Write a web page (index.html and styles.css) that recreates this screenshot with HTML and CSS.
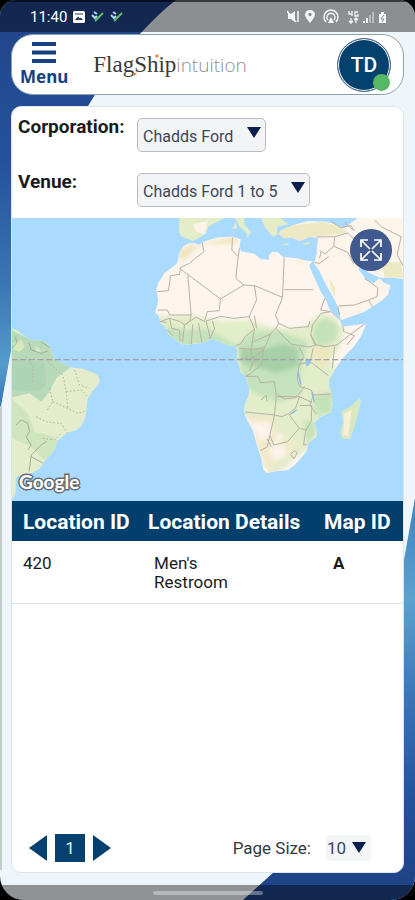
FILE: index.html
```html
<!DOCTYPE html>
<html lang="en">
<head>
<meta charset="utf-8">
<meta name="viewport" content="width=device-width, initial-scale=1">
<title>FlagShip intuition</title>
<link rel="stylesheet" href="styles.css">
</head>
<body>
<div class="screen">
  <svg class="backdrop" viewBox="0 0 415 900" preserveAspectRatio="none" aria-hidden="true">
    <defs>
      <linearGradient id="blueTop" x1="0" y1="0" x2="0" y2="1">
        <stop offset="0" stop-color="#21438a"/><stop offset=".4" stop-color="#24529b"/><stop offset=".7" stop-color="#3b76b4"/><stop offset=".9" stop-color="#559bce"/><stop offset="1" stop-color="#3673b0"/>
      </linearGradient>
      <linearGradient id="blueBottom" x1="0" y1="0" x2="0" y2="1">
        <stop offset="0" stop-color="#4083bd"/><stop offset=".25" stop-color="#5ba2d1"/><stop offset=".5" stop-color="#3975b7"/><stop offset=".75" stop-color="#24519c"/><stop offset="1" stop-color="#1d4183"/>
      </linearGradient>
    </defs>
    <path d="M0 0H176Q160 12 140 34Q112 65 88 106L12 345L1 406H0Z" fill="url(#blueTop)"/>
    <path d="M415 498L404 560Q380 700 274 872L243 900H415Z" fill="url(#blueBottom)"/>
    <path d="M0 406H2V870H0Z" fill="#c5cacd"/>
  </svg>

  <div class="status">
    <span class="status-left">
      <span class="clock">11:40</span>
      <svg width="12" height="12" viewBox="0 0 12 12"><rect width="12" height="12" rx="1.5" fill="#fff"/><path d="M2 9L5 5.500L7 7.500L8 6.500L10 9Z" fill="#24345f"/><path d="M2 3H10" stroke="#24345f"/></svg>
      <svg width="13" height="12" viewBox="0 0 13 12"><path d="M1 4L4 7L6 5M3 1L6 3" stroke="#a9d8f4" stroke-width="2" fill="none"/><path d="M4 10L8 6L12 2" stroke="#63bd63" stroke-width="2" fill="none"/></svg>
      <svg width="13" height="12" viewBox="0 0 13 12"><path d="M1 4L4 7L6 5M3 1L6 3" stroke="#a9d8f4" stroke-width="2" fill="none"/><path d="M4 10L8 6L12 2" stroke="#63bd63" stroke-width="2" fill="none"/></svg>
    </span>
    <svg class="status-right" width="100" height="16" viewBox="0 0 100 16" fill="none" stroke="#f5f5f5">
      <path d="M1 5H4L8 2V13L4 10H1Z" fill="#f5f5f5" stroke="none"/><path d="M0 2L9 13" stroke-width="1.500"/><path d="M11 2V13" stroke-width="1.500"/>
      <path d="M23 14Q18 8 18 5.500A5 4.500 0 0 1 28 5.500Q28 8 23 14Z" fill="#f5f5f5" stroke="none"/><circle cx="23" cy="5.500" r="1.700" fill="#8b8e8f" stroke="none"/>
      <path d="M39 13A7 7 0 1 1 49 13M41 11A4 4 0 1 1 47 11" stroke-width="1.500"/><path d="M44 8L47 14H41Z" fill="#f5f5f5" stroke="none"/>
      <path d="M62 2V5H65M65 2V7M71 3H68V7H71V5M64 9V14M62 12L64 14L66 12M69 14V9M67 11L69 9L71 11" stroke-width="1.300"/>
      <path d="M77 14V12M80 14V9" stroke-width="2"/><path d="M83 14V6M86 14V3" stroke="#b9bcbc" stroke-width="2"/>
      <path d="M92 5H94V3H97V5H99V14H92Z" fill="#f5f5f5" stroke="none"/><path d="M97 6L94 10H97L95 13" stroke="#8b8e8f"/>
    </svg>
  </div>

  <header class="topbar">
    <button class="menu" type="button">
      <svg width="26" height="24" viewBox="0 0 26 24" aria-hidden="true"><path d="M1 3H25M1 11.500H25M1 20H25" stroke="#174180" stroke-width="4"/></svg>
      <span>Menu</span>
    </button>
    <div class="brand"><span class="brand-main">FlagShip</span><span class="brand-sub">intuition</span>
      <svg class="brand-dots" viewBox="0 0 152 32" aria-hidden="true"><circle cx="64" cy="7" r="1.800" fill="#e0954a"/><path d="M39 24H44L41.500 27Z" fill="#e0872b"/></svg>
    </div>
    <button class="avatar" type="button" aria-label="Account TD">TD<span class="presence"></span></button>
  </header>

  <main class="card">
    <form class="filters">
      <label for="corp">Corporation:</label>
      <div class="pick">
        <select id="corp"><option>Chadds Ford</option></select>
        <svg class="caret" viewBox="0 0 14 11" aria-hidden="true"><path d="M0 0H14L7 11Z" fill="#0a1e4d"/></svg>
      </div>
      <label for="venue">Venue:</label>
      <div class="pick">
        <select id="venue"><option>Chadds Ford 1 to 5</option></select>
        <svg class="caret" viewBox="0 0 14 11" aria-hidden="true"><path d="M0 0H14L7 11Z" fill="#0a1e4d"/></svg>
      </div>
    </form>

    <div class="map">
      <svg class="map-art" viewBox="-579 9 1176 849" preserveAspectRatio="xMidYMid slice" role="img" aria-label="Map of Africa and the Atlantic">
        <defs>
          <clipPath id="africa"><path id="africaShape" d="M-45 84L-62 92L-76 115L-82 145L-103 162L-120 174L-139 204L-145 222L-141 242L-139 260L-148 292L-136 305L-132 325L-115 340L-107 358L-88 374L-62 390L-32 386L0 383L18 373L45 378L68 391L94 393L99 410L97 438L105 453L107 468L122 484L128 500L135 520L132 545L121 570L119 590L129 618L145 645L153 675L160 700L171 733L177 765L187 774L218 768L250 766L273 748L295 723L308 705L310 685L337 664L336 645L328 625L347 606L378 592L384 572L382 537L374 520L372 497L390 465L415 430L450 392L470 363L485 326L448 331L414 335L407 318L395 304L376 284L361 249L351 235L335 200L323 174L314 151L324 139L300 136L278 130L235 126L220 111L204 110L194 120L193 134L168 132L150 116L110 109L105 98L109 73L84 65L42 67L5 77L-17 89L-31 84Z"/></clipPath>
          <clipPath id="america"><path id="americaShape" d="M-579 340L-562 346L-550 356L-520 376L-485 378L-467 391L-454 420L-448 433L-433 441L-414 451L-401 457L-366 461L-336 472L-319 481L-314 500L-323 514L-336 528L-351 553L-354 583L-358 610L-371 634L-385 646L-413 654L-431 669L-443 680L-447 698L-463 720L-481 740L-495 762L-520 775L-553 780L-566 788L-567 838L-579 858Z"/></clipPath>
          <filter id="soft" x="-20%" y="-20%" width="140%" height="140%"><feGaussianBlur stdDeviation="7"/></filter>
        </defs>
        <rect x="-700" y="-100" width="1500" height="1100" fill="#abdaff"/>

        <use href="#africaShape" fill="#fdf5ee"/>
        <g clip-path="url(#africa)">
          <g filter="url(#soft)">
            <path d="M-160 300L-110 303L-40 300L50 318L140 316L210 340L300 335L345 295L390 305L420 345L405 400L380 430L400 490L400 590L345 650L320 690L260 740L200 790L180 740L240 660L110 600L90 500L80 400L-80 410Z" fill="#e2edc9"/>
            <path d="M-140 330L-60 345L0 340L100 390L140 350L220 345L310 380L290 470L290 540L215 560L120 520L100 400L-90 400Z" fill="#c4e2bb"/>
            <path d="M330 330L365 305L400 335L395 375L355 395L325 380ZM325 540L385 530L385 590L335 605ZM300 610L335 630L330 665L305 685Z" fill="#c4e2b9"/>
            <path d="M185 400L235 388L280 400L285 450L250 465L215 475L170 460L105 440L110 400Z" fill="#a7d0a7"/>
            <path d="M130 605L205 602L220 660L200 700L245 675L290 680L250 720L190 770L165 720Z" fill="#f1e9cb"/>
            <path d="M140 620L200 625L195 665L165 680ZM195 700L240 690L245 725L205 735Z" fill="#fcf4ed"/>
            <path d="M-88 110L-45 90L-15 92L-65 140ZM-20 86L90 66L105 85L40 88ZM270 131L305 136L285 145ZM325 395L390 395L360 460L330 440Z" fill="#eee6bf"/>
          </g>
          <g fill="none" stroke="#b9b1a6" stroke-width="3" stroke-linejoin="round">
            <path d="M-7 83L-2 110L-28 130L-45 145L-72 157L-75 178L-102 182L-108 227L-142 230M-72 162L20 231L48 252L118 210L94 190L98 152L101 125L82 105L84 68M105 99L101 125M-50 180L-40 300L-104 300L-112 285L-140 285M118 210L150 212L234 247L239 128M239 224H326M234 247L213 301L223 325L214 340M150 212L156 255L134 305L88 310L48 304L5 318M48 252L44 287L8 290L0 320L-25 306L-60 330M-40 300L-45 320L-60 330L-72 320L-105 310L-134 320M-60 330L-66 380M-35 328L-40 388M-18 324L-8 382M5 318L18 372M24 318L30 342L15 372M-134 320L-113 322M-105 310L-98 340L-75 346L-73 378M-113 344L-95 362"/>
            <path d="M134 305L150 342L122 365L110 385L94 393M150 342L143 382L198 357L214 340L242 370L262 388L315 396L335 390L319 360L324 330L350 295L379 290L412 320M150 302L156 340M223 325L255 340L312 335L316 318M379 290L348 285L361 250M319 360L330 388L360 395L397 390L435 360L483 325M412 320L418 350L450 362L427 390M390 395L384 460M143 382L141 405L180 398L198 357M105 400L137 402L145 430L178 402L170 450L135 478L122 484M105 430L150 430L135 468M122 484H160L168 503L210 500L215 545L210 600L122 591M215 545H285L273 580L252 596L232 605L210 600M285 545L322 562M285 397L298 425L284 448L278 490L285 514L320 525L327 540L382 537M317 440L372 482M326 400L317 440L284 448M327 540L316 570L335 597M285 572L322 571L320 620L304 645L284 640L252 596M210 600L196 662L188 696L167 707M196 662L208 690L249 680L284 640M304 645L297 690L308 688M188 672L200 695M258 718L270 707L279 713L268 731Z"/>
            <path d="M216 535L240 552L275 548L300 515M170 555L185 540L188 560"/>
          </g>
          <path d="M304 430L316 433L318 446L308 455L302 444Z" fill="#91c5ef"/><path d="M280 468L289 509M322 532L330 562M258 598L276 585" stroke="#8fb8e8" stroke-width="4" fill="none"/>
        </g>

        <path d="M410 590L436 575L454 560L464 546L469 560L461 595L448 640L437 671L415 672L407 655L416 622Z" fill="#d8e8c0"/><path d="M419 596L441 585L432 663L416 660Z" fill="#f5efd5"/>

        <path d="M-75 9L-77 50L-68 65L-47 72L-36 78L-12 66L5 55L11 35L42 18L61 9Z" fill="#e5edc8"/><path d="M-32 27L10 18L0 58L-28 48Z" fill="#fcf3e8"/>
        <path d="M92 9L105 35L125 52L129 68L140 52L120 30L118 9ZM170 9L182 38L205 65L218 60L218 35L252 28L228 9ZM84 42L93 20L98 41Z" fill="#e5edc8"/>
        <path d="M222 57L230 45L268 30L310 18L370 20L420 38L460 9H597V192L566 188L527 188L490 172L470 153L462 164L486 194L507 205L525 190L540 204L558 211L550 240L530 258L480 290L409 316L400 275L388 250L365 210L343 165L329 146L336 118L340 69L315 66L285 78L262 67L240 70Z" fill="#fdf4ec"/>
        <path d="M222 57L230 45L268 30L360 20L415 40L430 54L345 64L315 66L285 78L262 67L240 70ZM530 140L590 142L597 190L540 185Z" fill="#eee9c5"/>
        <path d="M375 190L392 220L392 245L380 220ZM500 60L510 45L520 60Z" fill="#f1e7bd"/>
        <path d="M230 88L253 84L250 91ZM292 86L318 80L310 90Z" fill="#e4e9c6"/>
        <g fill="none" stroke="#b9b1a6" stroke-width="3" stroke-linejoin="round">
          <path d="M336 66L390 65L388 94L362 116L346 108M388 94L430 112L448 148M390 65L430 54L455 80L470 115M372 125L346 145L331 143M403 273L450 270L492 255L505 277M492 255L518 245L520 218L480 190M400 275L405 300M380 20L410 38L440 32L450 48M530 35L560 50L590 65L578 120L597 155M510 15L530 35M350 110L345 130M420 22L445 44"/>
        </g>

        <use href="#americaShape" fill="#e3edcb"/>
        <g clip-path="url(#america)">
          <path d="M-579 345L-530 370L-475 375L-450 432L-400 455L-445 490L-465 530L-490 560L-525 535L-579 548Z" fill="#b9dab8"/>
          <path d="M-579 435L-480 440L-475 510L-500 530L-579 525Z" fill="#afd4b3"/>
          <path d="M-579 550L-530 595L-510 650L-450 665L-430 690L-480 735L-530 690L-579 670Z" fill="#cfe5bd"/>
          <path d="M-575 385L-548 374L-540 395L-555 410L-572 405ZM-510 392L-495 398L-490 415L-505 412Z" fill="#d8e8be"/>
          <g fill="none" stroke="#a2ae99" stroke-width="3" stroke-linejoin="round"><path d="M-567 365L-563 383L-579 400M-527 383L-520 405L-490 415L-470 408M-490 380L-460 400M-565 630L-550 615L-530 625L-525 650L-535 665L-520 690L-530 705M-520 720L-490 690L-475 680M-520 720L-526 770M-520 725L-485 744"/></g>
          <path d="M-535 425L-515 455L-515 505M-470 440L-425 480L-415 530L-410 580M-465 520L-455 560L-475 590M-505 605L-475 620L-430 625L-410 655M-390 465L-375 510L-345 520M-415 530L-370 525L-350 545M-455 560L-410 580L-380 595L-360 590M-485 670L-450 675L-430 655" fill="none" stroke="#afb59d" stroke-width="3" stroke-dasharray="5 6"/>
        </g>
        <path d="M-579 434H597" stroke="#a3a0aa" stroke-width="4" stroke-dasharray="18 8"/>
      </svg>
      <span class="google">Google</span>
      <button class="expand" type="button" aria-label="Full screen">
        <svg width="24" height="24" viewBox="0 0 24 24" fill="none" stroke="#fff" stroke-width="1.700"><path d="M2 9V2H9M15 2H22V9M22 15V22H15M9 22H2V15M2 2L11 11M22 2L13 11M22 22L13 13M2 22L11 13"/></svg>
      </button>
    </div>

    <table class="locations">
      <thead><tr><th>Location ID</th><th>Location Details</th><th>Map ID</th></tr></thead>
      <tbody><tr><td>420</td><td>Men's<br>Restroom</td><td>A</td></tr></tbody>
    </table>

    <footer class="pager">
      <nav class="pages" aria-label="Pages">
        <button type="button" aria-label="Previous page"><svg width="18" height="26" viewBox="0 0 18 26"><path d="M18 0V26L0 13Z" fill="#05406e"/></svg></button>
        <button type="button" class="current">1</button>
        <button type="button" aria-label="Next page"><svg width="18" height="26" viewBox="0 0 18 26"><path d="M0 0V26L18 13Z" fill="#05406e"/></svg></button>
      </nav>
      <div class="size">
        <label for="size">Page Size:</label>
        <div class="pick pick-small">
          <select id="size"><option>10</option></select>
          <svg class="caret" viewBox="0 0 14 11" aria-hidden="true"><path d="M0 0H14L7 11Z" fill="#0a1e4d"/></svg>
        </div>
      </div>
    </footer>
  </main>

  <div class="navbar"><span class="handle"></span></div>
</div>
</body>
</html>
```

FILE: styles.css
```css
* { box-sizing: border-box; }

body {
  margin: 0;
  background: #000;
  color: #1b1b1d;
  font-family: Roboto, "Liberation Sans", sans-serif;
}

button, select {
  font: inherit;
  color: inherit;
  border: 0;
  padding: 0;
  margin: 0;
  background: none;
}

svg { display: block; }

.screen {
  position: relative;
  display: flex;
  flex-direction: column;
  min-height: 100vh;
  overflow: hidden;
  border-radius: 16px 16px 24px 24px;
  background: #eff6fb;
}

.backdrop {
  position: absolute;
  inset: 0;
  width: 100%;
  height: 100%;
}

.status, .topbar, .card, .navbar { position: relative; }

.status {
  display: flex;
  align-items: center;
  justify-content: space-between;
  height: 32px;
  padding: 0 28px 0 30px;
  border-top: 2px solid rgba(0, 0, 0, 0.6);
  background: rgba(0, 0, 0, 0.42);
}

.status-left {
  display: flex;
  align-items: center;
  gap: 6px;
}

.clock {
  font-size: 15px;
  color: #fff;
}

.topbar {
  display: flex;
  align-items: center;
  height: 61px;
  margin: 2px 11px 0;
  padding: 0 12px 0 8px;
  border: 1px solid #8aa3a8;
  border-radius: 22px;
  background: #fff;
}

.menu {
  display: flex;
  flex-direction: column;
  align-items: center;
  color: #174180;
  font-family: "Noto Sans", sans-serif;
  font-size: 17px;
  font-weight: 700;
  line-height: 24px;
}

.brand {
  position: relative;
  display: flex;
  align-items: baseline;
  margin-left: 25px;
  line-height: 32px;
  white-space: nowrap;
}

.brand-main {
  font-family: "Liberation Serif", serif;
  font-size: 23px;
  color: #3b3836;
}

.brand-sub {
  font-family: "Open Sans", sans-serif;
  font-size: 19px;
  font-weight: 300;
  color: #8e8e8e;
}

.brand-dots {
  position: absolute;
  left: 0;
  top: 0;
  width: 152px;
  height: 32px;
}

.avatar {
  position: relative;
  width: 54px;
  height: 54px;
  margin-left: auto;
  border: 1px solid #526b8a;
  border-radius: 50%;
  background: #03416f;
  box-shadow: inset 0 0 0 1px #fff;
  color: #fff;
  font-size: 21px;
  font-weight: 500;
}

.presence {
  position: absolute;
  right: 0;
  bottom: 0;
  width: 17px;
  height: 17px;
  border-radius: 50%;
  background: #54b864;
}

.card {
  display: flex;
  flex: 1;
  flex-direction: column;
  margin: 11px 11px 12px;
  border: 1px solid #dde3e7;
  border-radius: 10px;
  background: #fff;
  overflow: hidden;
}

.filters {
  display: grid;
  grid-template-columns: 119px 1fr;
  grid-auto-rows: 55px;
  align-items: start;
  padding: 0 6px;
}

.filters label {
  padding-top: 8px;
  font-size: 19px;
  font-weight: 700;
  line-height: 24px;
}

.pick {
  position: relative;
  justify-self: start;
  margin-top: 11px;
}

.pick select {
  display: block;
  height: 34px;
  padding: 3px 31px 0 5px;
  border: 1px solid #b8bbc0;
  border-radius: 5px;
  appearance: none;
  background: #f2f4f5;
  color: #3c465b;
  font-size: 16px;
}

.caret {
  position: absolute;
  top: 9px;
  right: 5px;
  width: 14px;
  height: 11px;
  pointer-events: none;
}

.map {
  position: relative;
  height: 283px;
  margin-top: 1px;
}

.map-art {
  width: 100%;
  height: 100%;
}

.google {
  position: absolute;
  left: 7px;
  bottom: 6px;
  color: #fff;
  font-family: Lato, sans-serif;
  font-size: 19px;
  font-weight: 700;
  line-height: 26px;
  -webkit-text-stroke: 3px #666c72;
  paint-order: stroke fill;
}

.expand {
  position: absolute;
  top: 11px;
  right: 11px;
  display: grid;
  place-items: center;
  width: 42px;
  height: 42px;
  border-radius: 50%;
  background: #40598e;
}

.locations {
  width: 100%;
  border-collapse: collapse;
  text-align: left;
}

.locations th {
  height: 40px;
  padding: 2px 0 0 11px;
  background: #033f6c;
  color: #fff;
  font-size: 21px;
  font-weight: 700;
  white-space: nowrap;
}

.locations th:first-child { width: 32%; }
.locations th:last-child { width: 23%; }

.locations td {
  padding: 13px 0 11px 17px;
  border-bottom: 1px solid #dce1e5;
  font-size: 17px;
  line-height: 19px;
  vertical-align: top;
}

.locations td:first-child { padding-left: 11px; }

.locations td:last-child {
  padding-left: 20px;
  font-weight: 700;
}

.pager {
  display: flex;
  align-items: center;
  justify-content: space-between;
  margin-top: auto;
  padding: 0 32px 10px 17px;
}

.pages {
  display: flex;
  align-items: center;
  gap: 8px;
}

.current {
  width: 30px;
  height: 28px;
  background: #05406e;
  color: #e3eef7;
  font-size: 17px;
}

.size {
  display: flex;
  align-items: center;
  gap: 15px;
  color: #34373e;
  font-size: 17px;
}

.pick-small { margin-top: 0; }

.pick-small select {
  height: 26px;
  padding: 0 24px 0 1px;
  border: 0;
  font-size: 17px;
}

.pick-small .caret { top: 7px; }

.navbar {
  display: flex;
  justify-content: center;
  height: 15px;
  padding-top: 6px;
  background: rgba(0, 0, 0, 0.4);
}

.handle {
  width: 110px;
  height: 4px;
  border-radius: 2px;
  background: rgba(255, 255, 255, 0.35);
}
```
